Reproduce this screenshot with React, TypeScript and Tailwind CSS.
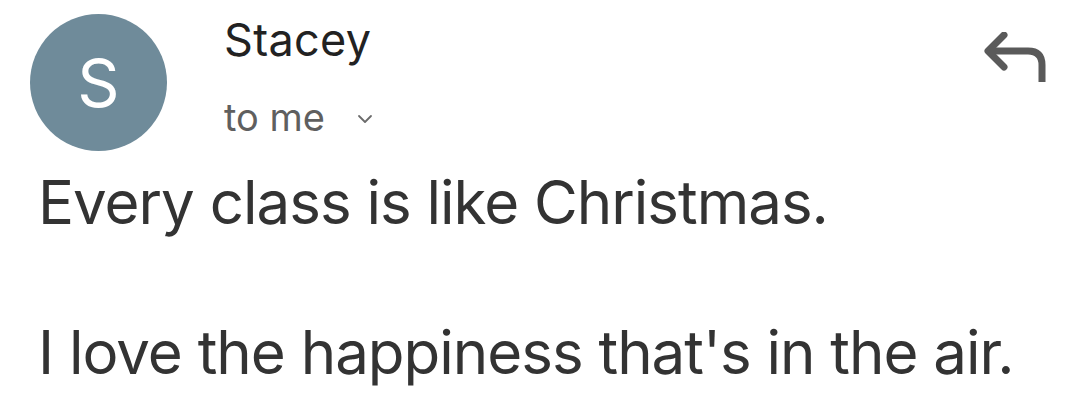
import React from "react";

export default function App() {
  return (
    <div className="w-[1080px] h-[402px] bg-white overflow-hidden" style={{ fontFamily: 'Inter, "Liberation Sans", Arial, sans-serif' }}>
      <div className="flex pl-[30px] pt-[14px] pr-[32px]">
        <div className="w-[137px] h-[137px] rounded-full bg-[#6f8b9a] flex items-center justify-center text-white text-[66px] leading-none shrink-0">
          S
        </div>
        <div className="flex flex-col pl-[57px]">
          <div className="text-[45px] leading-[52px] text-[#222] tracking-[0.3px]">Stacey</div>
          <div className="flex items-center mt-[29px] text-[38px] leading-[44px] text-[#5f5f5f]">
            <span>to me</span>
            <svg className="ml-[32px] mt-[4px]" width="16" height="12" viewBox="0 0 16 12" fill="none">
              <path d="M2 3 L8 9 L14 3" stroke="#6b6b6b" strokeWidth="1.8" strokeLinecap="round" strokeLinejoin="round" />
            </svg>
          </div>
        </div>
        <div className="ml-auto pt-[18px]">
          <svg width="64" height="52" viewBox="0 0 64 52" fill="none">
            <path d="M20 3 L4 19 L20 35" stroke="#5a5a5a" strokeWidth="7" strokeLinecap="round" strokeLinejoin="round" />
            <path d="M5 19 H44 Q58 19 58 33 V50" stroke="#5a5a5a" strokeWidth="7" strokeLinejoin="round" />
          </svg>
        </div>
      </div>
      <div className="pl-[38px] text-[60px] leading-[150px] tracking-[-1px] text-[#333] -mt-[24px]">
        <div>Every class is like Christmas.</div>
        <div>I love the happiness that's in the air.</div>
      </div>
    </div>
  );
}
